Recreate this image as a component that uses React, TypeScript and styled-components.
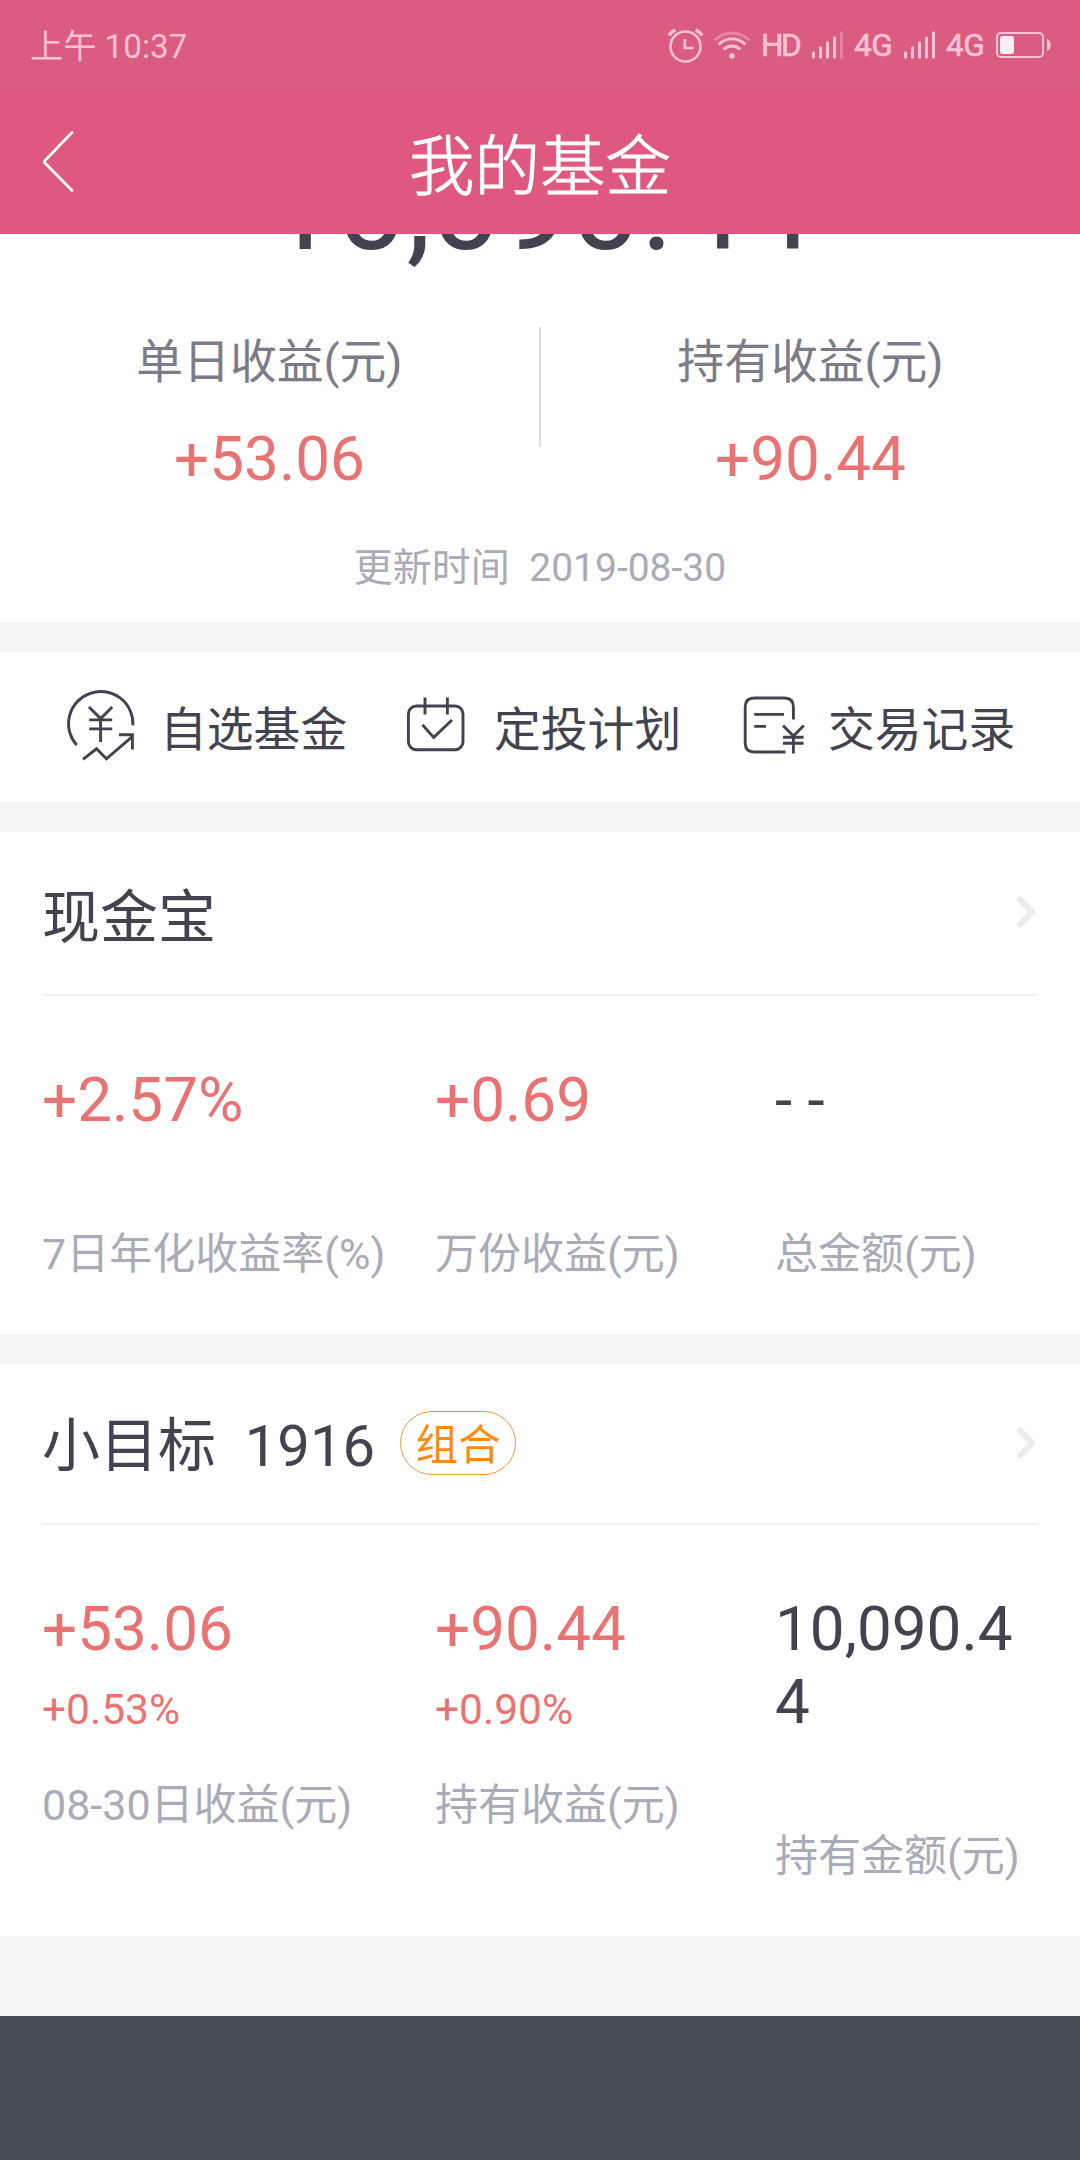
import React from "react";
import styled, { createGlobalStyle } from "styled-components";

const GlobalStyle = createGlobalStyle`
  * { box-sizing: border-box; }
  body {
    margin: 0;
    background: #f5f5f5;
    font-family: Roboto, "Noto Sans CJK SC", sans-serif;
    color: #434350;
  }
`;

const Screen = styled.div`
  width: 1080px;
  height: 2160px;
  display: flex;
  flex-direction: column;
  overflow: hidden;
  background: #f5f5f5;
`;

const StatusBar = styled.div`
  flex: none;
  height: 90px;
  padding: 2px 28px 0 30px;
  display: flex;
  align-items: center;
  justify-content: space-between;
  background: #da5c81;
  color: #fbc1d5;
`;

const Clock = styled.span`
  padding-top: 1px;
  font-size: 33.2px;
  line-height: 40px;
  white-space: pre;
`;

const StatusIcons = styled.div`
  display: flex;
  align-items: center;
  height: 40px;
`;

const StatusText = styled.span<{ $width: number; $tight?: boolean }>`
  width: ${(p) => p.$width}px;
  font-size: 31.5px;
  font-weight: 400;
  -webkit-text-stroke: 0.6px currentColor;
  line-height: 40px;
  letter-spacing: ${(p) => (p.$tight ? "-2.4px" : "-0.4px")};
  white-space: nowrap;
`;

const Header = styled.header`
  flex: none;
  height: 144px;
  padding: 0 40px;
  display: grid;
  grid-template-columns: 40px 1fr 40px;
  align-items: center;
  background: #df587f;
  color: #fff;
`;

const Title = styled.h1`
  margin: 0;
  padding-top: 12px;
  text-align: center;
  font-size: 65.5px;
  font-weight: 300;
  -webkit-text-stroke: 1px currentColor;
  line-height: 80px;
`;

const Summary = styled.section`
  flex: none;
  height: 388px;
  overflow: hidden;
  display: flex;
  flex-direction: column;
  background: #fff;
`;

const TotalAmount = styled.div`
  flex: none;
  margin-top: -98px;
  text-align: center;
  font-size: 124.5px;
  line-height: 140px;
`;

const StatRow = styled.div`
  flex: none;
  margin-top: 51px;
  height: 168px;
  display: grid;
  grid-template-columns: 539px 2px 539px;
`;

const StatDivider = styled.div`
  height: 120px;
  background: #dddddd;
`;

const Stat = styled.div`
  padding-top: 5px;
  display: flex;
  flex-direction: column;
  align-items: center;
  gap: 31px;
`;

const StatLabel = styled.div`
  font-size: 46.8px;
  line-height: 60px;
  color: #7b7b89;
`;

const StatValue = styled.div`
  font-size: 62px;
  line-height: 72px;
  color: #e97373;
`;

const Updated = styled.div`
  flex: none;
  margin-top: 50px;
  text-align: center;
  font-size: 39px;
  line-height: 46px;
  color: #aaaab8;
  white-space: pre;
`;

const Actions = styled.nav`
  flex: none;
  margin-top: 30px;
  height: 150px;
  padding-left: 61px;
  display: grid;
  grid-template-columns: repeat(3, 334px);
  background: #fff;
`;

const Action = styled.div`
  display: flex;
  align-items: center;
  gap: 23px;
`;

const ActionIcon = styled.svg`
  flex: none;
  width: 76px;
  height: 76px;
  fill: none;
  stroke: #434350;
  stroke-width: 2.9;
`;

const ActionLabel = styled.span`
  padding-top: 5px;
  font-size: 46.8px;
  line-height: 60px;
`;

const Card = styled.section<{ $height: number }>`
  flex: none;
  margin-top: 30px;
  height: ${(p) => p.$height}px;
  padding: 0 42px;
  background: #fff;
`;

const CardHead = styled.div<{ $height: number }>`
  height: ${(p) => p.$height}px;
  display: flex;
  align-items: center;
  border-bottom: 2px solid #f1f1f2;
`;

const FundName = styled.h2<{ $drop: number }>`
  margin: 0;
  padding-top: ${(p) => p.$drop}px;
  font-size: 58px;
  font-weight: 400;
  line-height: 70px;
  white-space: pre;
`;

const Badge = styled.span`
  margin-left: 25px;
  margin-bottom: 2px;
  width: 116px;
  height: 64px;
  padding-top: 4px;
  border: 1.5px solid #ee9a3c;
  border-radius: 32px;
  text-align: center;
  font-size: 42.5px;
  line-height: 60px;
  color: #f98b10;
`;

const Arrow = styled.svg`
  margin-left: auto;
  width: 22px;
  height: 34px;
  fill: none;
  stroke: #ebebeb;
  stroke-width: 6;
  stroke-linecap: round;
  stroke-linejoin: round;
`;

const Figures = styled.div`
  padding-top: 67px;
  display: grid;
  grid-template-columns: 393px 340px 1fr;
`;

const Figure = styled.div`
  display: flex;
  flex-direction: column;
`;

const Amount = styled.div<{ $gain?: boolean }>`
  font-size: 62px;
  line-height: 73px;
  word-break: break-all;
  color: ${(p) => (p.$gain ? "#e97373" : "#434350")};
`;

const Rate = styled.div`
  margin-top: 20px;
  font-size: 42.5px;
  line-height: 50px;
  color: #e97373;
`;

const Caption = styled.div<{ $gap: number }>`
  margin-top: ${(p) => p.$gap}px;
  font-size: 43px;
  line-height: 50px;
  white-space: nowrap;
  color: #aaaab8;
`;

const NavBar = styled.div`
  flex: none;
  margin-top: 80px;
  height: 144px;
  background: #454c53;
`;

const AlarmIcon = () => (
  <svg width="36" height="36" viewBox="0 0 36 36" fill="none" stroke="currentColor" strokeWidth="2.6">
    <circle cx="17.5" cy="18.5" r="15" />
    <path d="M16.8 11V20H25.5" />
    <path d="M1 7.5C2.5 5 4.5 3 7.5 2.2M34 7.5C32.5 5 30.5 3 27.5 2.2" strokeWidth="3.4" />
  </svg>
);

const WifiIcon = () => (
  <svg width="38" height="32" viewBox="0 0 38 32" fill="none" stroke="currentColor" strokeWidth="2.8">
    <path d="M0.8 10.2C10.5 0.6 25.5 0.6 35.2 10.2" opacity="0.42" />
    <path d="M4.6 14.4C12.2 7 23.8 7 31.4 14.4" />
    <path d="M9.6 19.6C14.5 14.8 21.5 14.8 26.4 19.6" />
    <circle cx="18" cy="26" r="2.8" fill="currentColor" stroke="none" />
  </svg>
);

const SignalIcon = ({ level }: { level: number }) => (
  <svg width="32" height="30" viewBox="0 0 32 30" fill="currentColor">
    {[0, 1, 2, 3, 4].map((i) => (
      <rect
        key={i}
        x={i * 7}
        y={20.5 - i * 5}
        width="3"
        height={7 + i * 5}
        rx="1"
        opacity={i < level ? 1 : 0.4}
      />
    ))}
  </svg>
);

const BatteryIcon = () => (
  <svg width="56" height="30" viewBox="0 0 56 30" fill="none">
    <rect x="1" y="2" width="46" height="24" rx="4" stroke="currentColor" strokeWidth="2" />
    <rect x="4" y="5" width="14" height="18" rx="2.5" fill="#fdeef4" />
    <path d="M51 8C56 9 56 19 51 20Z" fill="currentColor" />
  </svg>
);

const Spacer = styled.span<{ $w: number }>`
  flex: none;
  width: ${(p) => p.$w}px;
`;

const BackIcon = () => (
  <svg width="40" height="64" viewBox="0 0 40 64" fill="none" stroke="#fff" strokeWidth="2.8" strokeLinecap="round" strokeLinejoin="round">
    <path d="M32 2.5L5 30.5Q3.8 31.8 5 33.1L32 60.5" />
  </svg>
);

const WatchlistIcon = () => (
  <ActionIcon viewBox="0 0 76 76">
    <path d="M71.9 36.4A32.2 32.2 0 1 0 15.6 56" />
    <path d="M28 18L39.6 29.6L51.2 18M28.2 30.9H51.2M28.2 39.9H51.2M39.6 29.6V53" />
    <path d="M22 70.4L35.5 59.8L45.4 69.8L71 47.8M58 45.7H71.4V60.5" />
  </ActionIcon>
);

const PlanIcon = () => (
  <ActionIcon viewBox="0 0 76 76">
    <rect x="13.4" y="17" width="54.6" height="43.7" rx="8" />
    <path d="M30 8.5V25.5M52.4 8.5V25.5M27.4 35.8L38.7 48.4L57 31" />
  </ActionIcon>
);

const RecordIcon = () => (
  <ActionIcon viewBox="0 0 76 76">
    <path d="M64.4 30.5V18Q64.4 9 55.4 9H25.2Q16.2 9 16.2 18V54Q16.2 63 25.2 63H56.5" />
    <path d="M25.2 25.4H55M25.2 37.4H37M54 36.4L64.4 47L74.8 36.4M54 48.2H74.6M54 54.2H74.6M64.4 47V64.6" />
  </ActionIcon>
);

const ArrowIcon = () => (
  <Arrow viewBox="0 0 22 34">
    <path d="M4 3.5L16.5 16L4 28.5" />
  </Arrow>
);

type FigureData = { amount: string; gain?: boolean; rate?: string; caption: string };

const cashFigures: FigureData[] = [
  { amount: "+2.57%", gain: true, caption: "7日年化收益率(%)" },
  { amount: "+0.69", gain: true, caption: "万份收益(元)" },
  { amount: "- -", caption: "总金额(元)" },
];

const goalFigures: FigureData[] = [
  { amount: "+53.06", gain: true, rate: "+0.53%", caption: "08-30日收益(元)" },
  { amount: "+90.44", gain: true, rate: "+0.90%", caption: "持有收益(元)" },
  { amount: "10,090.44", caption: "持有金额(元)" },
];

const FigureRow = ({ items }: { items: FigureData[] }) => (
  <Figures>
    {items.map((f) => (
      <Figure key={f.caption}>
        <Amount $gain={f.gain}>{f.amount}</Amount>
        {f.rate && <Rate>{f.rate}</Rate>}
        <Caption $gap={f.rate ? 45 : 93}>{f.caption}</Caption>
      </Figure>
    ))}
  </Figures>
);

export default function App() {
  return (
    <Screen lang="zh-CN">
      <GlobalStyle />
      <StatusBar>
        <Clock>上午 10:37</Clock>
        <StatusIcons>
          <AlarmIcon />
          <Spacer $w={10} />
          <WifiIcon />
          <Spacer $w={9} />
          <StatusText $width={51} $tight>HD</StatusText>
          <SignalIcon level={4} />
          <Spacer $w={10} />
          <StatusText $width={50}>4G</StatusText>
          <SignalIcon level={5} />
          <Spacer $w={10} />
          <StatusText $width={50}>4G</StatusText>
          <BatteryIcon />
        </StatusIcons>
      </StatusBar>
      <Header>
        <BackIcon />
        <Title>我的基金</Title>
      </Header>
      <Summary>
        <TotalAmount>10,090.44</TotalAmount>
        <StatRow>
          <Stat>
            <StatLabel>单日收益(元)</StatLabel>
            <StatValue>+53.06</StatValue>
          </Stat>
          <StatDivider />
          <Stat>
            <StatLabel>持有收益(元)</StatLabel>
            <StatValue>+90.44</StatValue>
          </Stat>
        </StatRow>
        <Updated>{"更新时间  2019-08-30"}</Updated>
      </Summary>
      <Actions>
        <Action>
          <WatchlistIcon />
          <ActionLabel>自选基金</ActionLabel>
        </Action>
        <Action>
          <PlanIcon />
          <ActionLabel>定投计划</ActionLabel>
        </Action>
        <Action>
          <RecordIcon />
          <ActionLabel>交易记录</ActionLabel>
        </Action>
      </Actions>
      <Card $height={502}>
        <CardHead $height={164}>
          <FundName $drop={9}>现金宝</FundName>
          <ArrowIcon />
        </CardHead>
        <FigureRow items={cashFigures} />
      </Card>
      <Card $height={572}>
        <CardHead $height={161}>
          <FundName $drop={4}>{"小目标  1916"}</FundName>
          <Badge>组合</Badge>
          <ArrowIcon />
        </CardHead>
        <FigureRow items={goalFigures} />
      </Card>
      <NavBar />
    </Screen>
  );
}
